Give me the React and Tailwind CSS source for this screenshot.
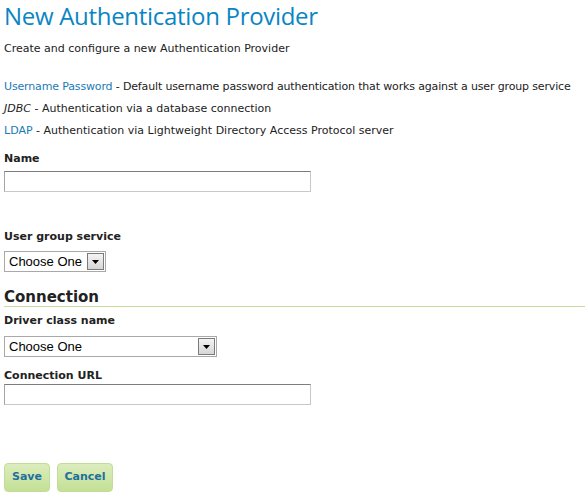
import { useState } from 'react';

const body = "font-['DejaVu_Sans',Verdana,sans-serif]";

const SelectBox = ({ width }) => (
  <div className={`flex items-center h-[21px] border border-[#a9a9a9] bg-white ${width}`}>
    <span className="flex-1 pl-[4px] text-[13px] text-black font-['Liberation_Sans',Arial,sans-serif] leading-none">
      Choose One
    </span>
    <span className="w-[17px] h-[17px] mr-[1px] flex items-center justify-center border border-[#7a7a7a] bg-gradient-to-b from-[#f4f4f4] to-[#d6d6d6]">
      <svg width="7" height="4" viewBox="0 0 7 4">
        <path d="M0 0h7L3.5 4z" fill="#000" />
      </svg>
    </span>
  </div>
);

const TextBox = () => (
  <input
    type="text"
    className="block w-[307px] h-[21px] border border-[#c8c8c8] border-t-[#7d7d7d] border-l-[#a5a5a5] outline-none"
  />
);

const Label = ({ children }) => (
  <div className="text-[11px] font-bold text-[#222] leading-[14px]">{children}</div>
);

export default function App() {
  const [name, setName] = useState('');

  return (
    <div className={`w-[585px] h-[501px] bg-white pl-[4px] ${body} text-[#222]`}>
      <h1 className="pt-[1px] text-[24px] leading-[29px] text-[#0a85c4] font-['Open_Sans',sans-serif] tracking-[-0.3px]">
        New Authentication Provider
      </h1>
      <p className="mt-[12px] text-[11px] leading-[14px]">Create and configure a new Authentication Provider</p>

      <div className="mt-[24px] flex flex-col gap-[8px] text-[11px] leading-[14px]">
        <div className="whitespace-nowrap tracking-[-0.15px]">
          <span className="text-[#1b7bb5]">Username Password</span> - Default username password authentication that works against a user group service
        </div>
        <div>
          <span className="italic">JDBC</span> - Authentication via a database connection
        </div>
        <div>
          <span className="text-[#1b7bb5]">LDAP</span> - Authentication via Lightweight Directory Access Protocol server
        </div>
      </div>

      <div className="mt-[14px]">
        <Label>Name</Label>
        <div className="mt-[5px]">
          <input
            type="text"
            value={name}
            onChange={(e) => setName(e.target.value)}
            className="block w-[307px] h-[21px] border border-[#c8c8c8] border-t-[#7d7d7d] border-l-[#a5a5a5] outline-none"
          />
        </div>
      </div>

      <div className="mt-[38px]">
        <Label>User group service</Label>
        <div className="mt-[7px]">
          <SelectBox width="w-[102px]" />
        </div>
      </div>

      <div className="mt-[17px] border-b border-[#c6dd9c]">
        <h2 className="text-[15px] font-bold leading-[17px] text-[#222]">Connection</h2>
      </div>

      <div className="mt-[7px]">
        <Label>Driver class name</Label>
        <div className="mt-[8px]">
          <SelectBox width="w-[213px]" />
        </div>
      </div>

      <div className="mt-[12px]">
        <Label>Connection URL</Label>
        <div className="mt-[1px]">
          <TextBox />
        </div>
      </div>

      <div className="mt-[58px] flex gap-[7px]">
        <button className="w-[46px] h-[29px] rounded-[4px] border border-[#c2dc9a] bg-gradient-to-b from-[#dcedbd] to-[#c3e095] text-[11px] font-bold text-[#1f6f9e]">
          Save
        </button>
        <button className="w-[56px] h-[29px] rounded-[4px] border border-[#c2dc9a] bg-gradient-to-b from-[#dcedbd] to-[#c3e095] text-[11px] font-bold text-[#1f6f9e]">
          Cancel
        </button>
      </div>
    </div>
  );
}
